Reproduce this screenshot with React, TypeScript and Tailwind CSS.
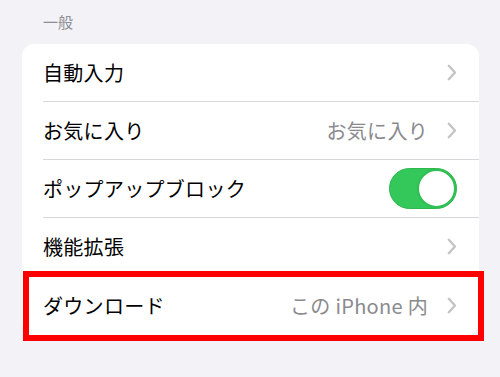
import type { ReactNode } from "react";

function Chevron() {
  return (
    <svg width="10" height="17" viewBox="0 0 10 17" fill="none" className="shrink-0">
      <path d="M1.8 1.8 L8 8.5 L1.8 15.2" stroke="#c4c4c7" strokeWidth="2.4" strokeLinecap="round" strokeLinejoin="round" />
    </svg>
  );
}

function Toggle() {
  return (
    <div className="relative h-[41px] w-[68px] shrink-0 rounded-full border border-[#2cb84e] bg-[#34c759]">
      <div className="absolute right-0 top-0 h-[39px] w-[39px] rounded-full border-2 border-[#2fbf52] bg-white" />
    </div>
  );
}

function Row({
  label,
  value,
  right,
  last,
  highlight
}: {
  label: string;
  value?: string;
  right?: ReactNode;
  last?: boolean;
  highlight?: boolean;
}) {
  return (
    <div className="relative pl-[21px]">
      <div
        className={`flex items-center justify-between pr-[22px] ${last ? "h-[59px]" : "h-[58px] border-b border-[#d8d8dc]"}`}
      >
        <span className="text-[20px] leading-none tracking-[0.3px] text-black">{label}</span>
        <div className="flex items-center gap-[19px]">
          {value ? <span className="whitespace-pre text-[20px] leading-none tracking-[0.3px] text-[#8a8a8e]">{value}</span> : null}
          {right ?? <Chevron />}
        </div>
      </div>
      {highlight ? (
        <div className="pointer-events-none absolute bottom-[-6px] left-[1px] right-[-5px] top-[-5px] border-[6px] border-[#ff0000]" />
      ) : null}
    </div>
  );
}

export default function App() {
  return (
    <div
      className="h-[377px] w-[500px] overflow-hidden bg-[#f2f2f7] pl-[22px] pr-[21px]"
      style={{ fontFamily: '"Noto Sans CJK JP", "Noto Sans", sans-serif' }}
    >
      <div className="flex h-[44px] items-center pl-[21px] pb-[1px]">
        <span className="text-[15px] leading-none text-[#8e8e93]">一般</span>
      </div>
      <div className="rounded-[12px] bg-white">
        <Row label="自動入力" />
        <Row label="お気に入り" value="お気に入り" />
        <Row label="ポップアップブロック" right={<Toggle />} />
        <Row label="機能拡張" />
        <Row label="ダウンロード" value="この iPhone 内" last highlight />
      </div>
    </div>
  );
}
